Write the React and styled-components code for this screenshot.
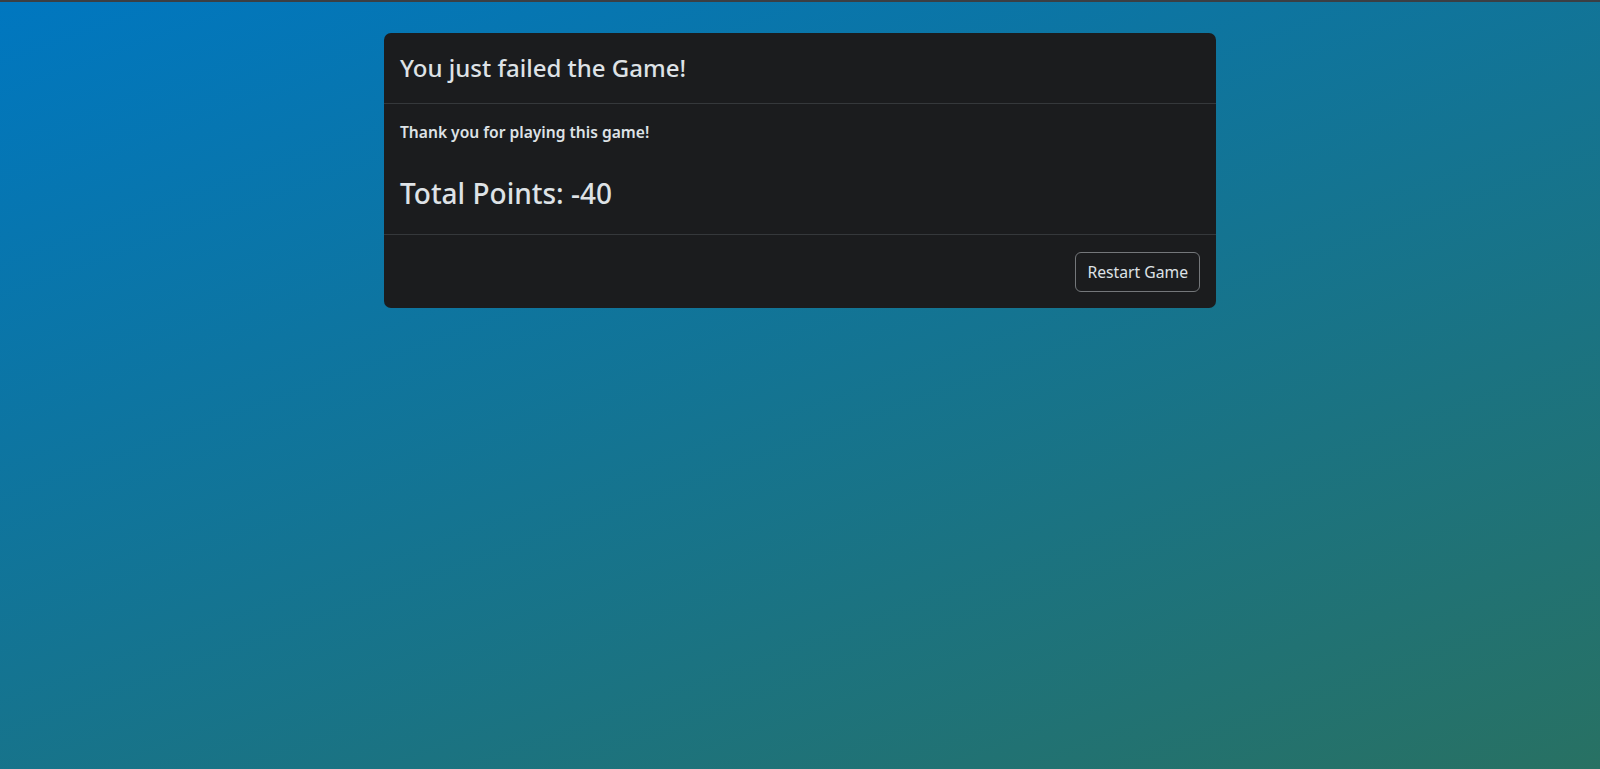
import React from "react";
import styled, { createGlobalStyle } from "styled-components";

const Global = createGlobalStyle`
  html, body { margin: 0; padding: 0; height: 100%; }
  body {
    font-family: "Noto Sans", "Open Sans", sans-serif;
    color: #dee2e6;
  }
  #root { min-height: 100%; }
`;

const Page = styled.div`
  min-height: 769px;
  box-sizing: border-box;
  border-top: 2px solid #3b3f44;
  padding-top: 31px;
  background: linear-gradient(160deg, #0077c0 0%, #287163 100%);
`;

const Card = styled.div`
  width: 832px;
  margin: 0 auto;
  background: #1b1c1e;
  border-radius: 7px;
  overflow: hidden;
`;

const Header = styled.div`
  padding: 16px 16px;
  border-bottom: 1px solid #35383b;
`;

const Title = styled.h4`
  margin: 0;
  font-size: 24px;
  font-weight: 500;
  line-height: 38px;
  color: #dee2e6;
`;

const Body = styled.div`
  padding: 16px 16px 16px;
  border-bottom: 1px solid #35383b;
`;

const Message = styled.p`
  margin: 0 0 32px;
  font-size: 15.6px;
  font-weight: 600;
  line-height: 24px;
`;

const Points = styled.h3`
  margin: 0 0 8px;
  font-size: 28px;
  font-weight: 500;
  line-height: 34px;
  color: #dee2e6;
`;

const Footer = styled.div`
  display: flex;
  justify-content: flex-end;
  padding: 17px 16px 16px;
`;

const Button = styled.button`
  font-family: inherit;
  font-size: 15.7px;
  line-height: 24px;
  padding: 7px 11px;
  color: #dee2e6;
  background: transparent;
  border: 1px solid #74777a;
  border-radius: 6px;
  cursor: pointer;
`;

export default function App() {
  return (
    <>
      <Global />
      <Page>
        <Card>
          <Header>
            <Title>You just failed the Game!</Title>
          </Header>
          <Body>
            <Message>Thank you for playing this game!</Message>
            <Points>Total Points: -40</Points>
          </Body>
          <Footer>
            <Button>Restart Game</Button>
          </Footer>
        </Card>
      </Page>
    </>
  );
}
